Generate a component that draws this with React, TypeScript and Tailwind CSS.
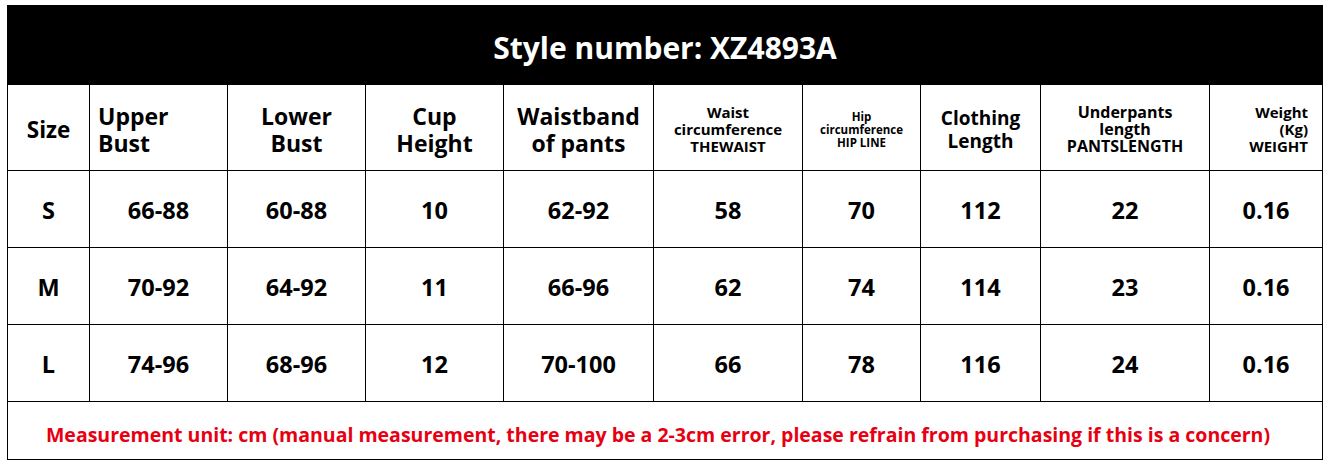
import React from "react";

const cols = [82, 138, 138, 138, 150, 149, 118, 120, 169, 113];

const rows = [
   ["S", "66-88", "60-88", "10", "62-92", "58", "70", "112", "22", "0.16"],
   ["M", "70-92", "64-92", "11", "66-96", "62", "74", "114", "23", "0.16"],
   ["L", "74-96", "68-96", "12", "70-100", "66", "78", "116", "24", "0.16"],
];

const cell = "border border-black p-0 align-middle";
const head = "border border-black p-0 pt-[4px] align-middle";

export default function App() {
   return (
      <div
         className="bg-white pl-[7px] pt-[5px] text-black"
         style={{ fontFamily: '"Open Sans", "Noto Sans", sans-serif' }}
      >
         <table className="w-[1316px] table-fixed border-collapse font-bold">
            <colgroup>
               {cols.map((w, i) => (
                  <col key={i} style={{ width: w }} />
               ))}
            </colgroup>
            <tbody>
               <tr className="h-[79px]">
                  <td
                     colSpan={10}
                     className="border border-black bg-black text-center text-[30px] text-white"
                  >
                     <span className="relative top-[2px]">Style number: XZ4893A</span>
                  </td>
               </tr>
               <tr className="h-[86px]">
                  <td className={`${head} text-center text-[22.5px]`}>Size</td>
                  <td className={`${head} pl-[8px] text-left text-[23px] leading-[27px]`}>
                     Upper
                     <br />
                     Bust
                  </td>
                  <td className={`${head} text-center text-[23px] leading-[27px]`}>
                     Lower
                     <br />
                     Bust
                  </td>
                  <td className={`${head} text-center text-[23px] leading-[27px]`}>
                     Cup
                     <br />
                     Height
                  </td>
                  <td className={`${head} text-center text-[23px] leading-[27px]`}>
                     Waistband
                     <br />
                     of pants
                  </td>
                  <td className={`${head} text-center text-[15px] leading-[17px]`}>
                     Waist
                     <br />
                     circumference
                     <br />
                     THEWAIST
                  </td>
                  <td className={`${head} text-center text-[11.5px] leading-[13px]`}>
                     Hip
                     <br />
                     circumference
                     <br />
                     HIP LINE
                  </td>
                  <td className={`${head} text-center text-[19px] leading-[23px]`}>
                     Clothing
                     <br />
                     Length
                  </td>
                  <td className={`${head} text-center text-[16px] leading-[17px]`}>
                     Underpants
                     <br />
                     length
                     <br />
                     PANTSLENGTH
                  </td>
                  <td className={`${head} pr-[14px] text-right text-[15px] leading-[17px]`}>
                     Weight
                     <br />
                     (Kg)
                     <br />
                     WEIGHT
                  </td>
               </tr>
               {rows.map((r) => (
                  <tr key={r[0]} className="h-[77px]">
                     {r.map((v, i) => (
                        <td key={i} className={`${cell} pt-[3px] text-center text-[23.5px]`}>
                           {v}
                        </td>
                     ))}
                  </tr>
               ))}
               <tr className="h-[58px]">
                  <td
                     colSpan={10}
                     className="border border-black pr-[14px] text-center text-[19.5px] text-[#e60012]"
                  >
                     <span className="relative top-[4px]">
                        Measurement unit: cm (manual measurement, there may be a 2-3cm
                        error, please refrain from purchasing if this is a concern)
                     </span>
                  </td>
               </tr>
            </tbody>
         </table>
      </div>
   );
}
